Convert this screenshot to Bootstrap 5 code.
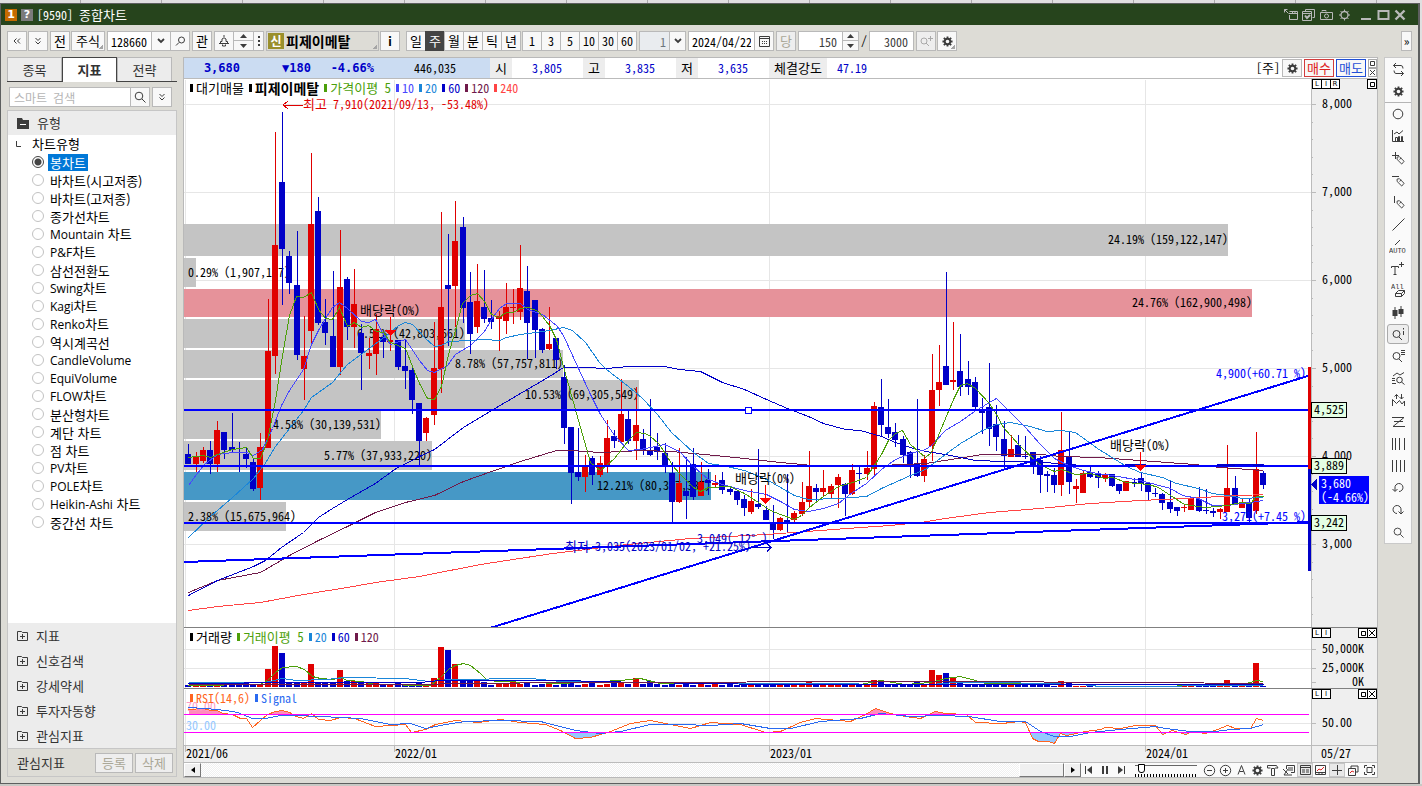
<!DOCTYPE html>
<html lang="ko">
<head>
<meta charset="utf-8">
<meta name="viewport" content="width=device-width, initial-scale=1">
<title>[9590] 종합차트</title>
<link href="https://cdn.jsdelivr.net/npm/bootstrap@5.3.0/dist/css/bootstrap.min.css" rel="stylesheet">
<style>
:root{--mono:"Noto Sans Mono CJK KR","Liberation Mono","Noto Sans CJK KR",monospace;--edge:#b9b9b9;--shell:#dddcd6;--ink:#3c3c3c}
body{font:12px/16px var(--mono);color:#000;background:#e0e0e0;height:100vh;overflow:hidden}
svg{display:block;flex:none}
.ic{fill:none;stroke:var(--ink);stroke-width:1}
.ic .f{fill:var(--ink);stroke:none}
.topstrip{height:3px;background:linear-gradient(90deg,#aaa 1px,#e0e0e0 1px) 80px 0/81px 3px repeat-x;flex:none}
.win{border:1px solid #5d5f5f;border-right-width:2px;margin-right:2px;background:var(--shell);min-height:0}
.footstrip{height:2px;background:#c9c9c5;flex:none}
.titlebar{height:21px;background:#26441c;color:#fff;padding:0 12px 0 4px;flex:none}
.tile{width:12px;height:12px;font:bold 11px/12px "DejaVu Sans",sans-serif;text-align:center;color:#fff}
.tile-o{background:#c46a00}.tile-g{background:#7b7b7b}
.titlebar .ic{stroke:#b9b9b9}
.titlebar .ic .f{fill:#b9b9b9}
.tbar{padding:6px 6px 6px 6px;gap:2px;flex:none}
.tb{--bs-btn-padding-x:0;--bs-btn-padding-y:0;--bs-btn-font-size:12px;--bs-btn-line-height:16px;--bs-btn-border-radius:0;--bs-btn-border-color:var(--edge);--bs-btn-bg:#f8f8f8;--bs-btn-color:#000;--bs-btn-font-family:var(--mono);--bs-btn-hover-bg:#fff;--bs-btn-hover-border-color:#999;
 width:20px;height:20px;display:inline-flex;align-items:center;justify-content:center;flex:none;position:relative}
.ko{font-size:13px}
.tb.ko{--bs-btn-font-size:13px}
.tb.on{background:#444;color:#fff;border-color:#444}
.tb.dim{color:#aaa797;background:#eee}
.tb.dim .ic{stroke:#aaa}
.corner::after{content:"";position:absolute;right:1px;bottom:1px;width:4px;height:4px;background:linear-gradient(135deg,transparent 50%,#a5a5a5 50%)}
.join>*+*{margin-left:-1px}
.fld{height:20px;border:1px solid var(--edge);border-radius:0;padding:0 3px;font:12px/16px var(--mono);background:#fff;color:#000;flex:none;min-height:0}
.w11{width:11px}.w17{width:17px}.w18{width:18px}.w30{width:31px}.w34{width:34px}.w45{width:45px}.w67{width:67px}
.fld.qty{color:#3c3c3c;padding-right:5px}
.spin{width:21px;height:20px;flex:none}
.spin.narrow{width:17px}
.spin .tb{width:100%;height:10px}
.spin .tb+.tb{height:11px;margin-top:-1px}
.stock{width:113px;height:20px;border:1px solid var(--edge);padding-left:1px;background:#dddcd6;position:relative;flex:none;gap:2px}
.stock b{font-size:14px}
.newtag{width:16px;height:16px;background:#9a8f2c;color:#fff;font-weight:bold;text-align:center}
.work{padding:0 6px 5px 6px;min-height:0}
.side{width:170px;flex:none;padding-bottom:1px}
.sidetabs{border-bottom:1px solid #444;height:25px;flex:none}
.sidetabs button{width:55px;height:24px;padding:0;border:1px solid var(--edge);border-bottom:0;background:#ececec;border-radius:0;color:#333;font:13px/22px var(--mono)}
.sidetabs button.active{background:#fff;border:1px solid #444;border-bottom:0;height:25px;font-weight:bold}
.sideb{border:1px solid #c6c6c6;min-height:0}
.find{padding:5px 2px 3px;gap:2px}
.find .fld{width:122px;padding:0 4px;background:#fff}
.find .fld::placeholder{color:#b5b5b5;opacity:1}
.grp{height:25px;background:#ececec;padding-left:9px;gap:8px;color:#333;border:0;width:100%;font:13px/16px var(--mono);text-align:left;flex:none}
.grp.open{height:24px}
.tree{background:#fff;font:13px/18px "Noto Sans CJK KR",sans-serif;min-height:0;overflow:hidden}
.tree label{height:18px;padding-left:24px;gap:4px}
.tree label>span{padding:0 2px;line-height:17px;white-space:nowrap}
.tree .lat{font:12px/16px "Open Sans","Noto Sans CJK KR",sans-serif}
.tree input{appearance:none;width:12px;height:12px;border:1px solid #c2c2c2;border-radius:50%;margin:0;background:#fff;flex:none}
.tree input:checked{border-color:#444;background:radial-gradient(circle,#444 0 3px,#fff 4px)}
.tree input:checked+span{background:#0078d7;color:#fff}
.treehead{padding-left:8px;gap:11px;height:18px}
.sidefoot{height:28px;background:var(--shell);border-top:1px solid #c6c6c6;padding:0 3px 0 9px;color:#333;flex:none}
.sidefoot .tb{width:38px}
.sidefoot .tb+.tb{margin-left:2px}
.board{border:1px solid var(--edge);background:#fff;min-width:0;margin-left:6px}
.quote{height:21px;border-bottom:1px solid #bbb;flex:none}
.quote .bl{background:#cbdcf2;width:306px;flex:none}
.num{color:#0000c8;text-align:right;flex:none}
.big{font:bold 12px/16px "DejaVu Sans Mono",monospace}
.q1{width:56px}.q2{width:71px}.q3{width:63px}.q4{width:82px;color:#000}
.lab{background:#ededed;width:22px;text-align:center;align-self:stretch;line-height:19px;flex:none}
.lab.wide{width:58px}
.val{width:71px;padding-right:21px}
.red{--bs-btn-color:#d22;--bs-btn-border-color:#d23c3c;width:30px;height:18px}
.blu{--bs-btn-color:#1f4fd6;--bs-btn-border-color:#1f4fd6;width:30px;height:18px}
.cfg{height:18px}
.tiny{width:9px;height:9px;border:1px solid #aaa;padding:0;background:#fff;display:flex;align-items:center;justify-content:center}
.pane{position:relative;border-bottom:1px solid #808080;flex:none;background:linear-gradient(#efefef,#efefef) right/66px 100% no-repeat}
.pane svg.plot{position:absolute;left:0;top:0;width:100%;height:100%;shape-rendering:crispEdges}
.pane.main{flex:1 1 0;min-height:0}
.vol{height:61px}.rsi{height:57px;border-color:#bbb}.dates{height:17px;background:#efefef;border-color:#bbb}
.legend{position:absolute;left:6px;top:1px;gap:5px;line-height:16px;height:16px;align-items:center}
.legend span{display:flex;align-items:center;gap:3px;white-space:nowrap}
.legend span::before{content:"";width:3px;height:8px;background:currentColor}
.legend b{font-size:14px}
.cg{color:#4c9f0a}.c10{color:#4646ff}.c20{color:#1a86d9}.c60{color:#0000c8}.c120{color:#701a4a}.c240{color:#ff4444}.cor{color:#ff6420}.csg{color:#2a6af0}
.lir{position:absolute;top:0;right:0;width:65px}
.lir button{width:10px;height:10px;border:1px solid #000;background:#fff;padding:0;font:7px/7px "DejaVu Sans",sans-serif;display:flex;align-items:center;justify-content:center;color:#000}
.lir .ic{stroke:#000}
.lir button+button{margin-left:-1px}
.lir button.end{margin-left:auto}
.plot text{font:12px var(--mono);white-space:pre}
.plot .ko{font-size:13px}
.scroller{height:14px;background:#fafafa;flex:none;overflow:hidden}
.sbtn{height:14px;border:1px solid #fff;border-right:1px solid #777;border-bottom:1px solid #777;background:#f0f0f0;padding:0;display:flex;align-items:center;justify-content:center;flex:none;outline:0}
.track{background:repeating-conic-gradient(#f0f0f0 0 25%,#fff 0 50%) 0 0/2px 2px}
.mini{width:16px;height:14px;border:0;background:none;padding:0;display:flex;align-items:center;justify-content:center;flex:none}
.mini.on{background:#e8e8e8;outline:1px solid #c6c6c6;outline-offset:-1px}
.zoomer{width:62px;height:14px;margin:0 4px 0 6px;background:linear-gradient(#666,#666) 0 2px/100% 1px no-repeat,repeating-linear-gradient(90deg,#000 0 1px,transparent 1px 3px) 0 11px/100% 3px no-repeat;appearance:none;flex:none}
.zoomer::-webkit-slider-thumb{appearance:none;width:7px;height:9px;border:1px solid #000;border-radius:0 0 3px 3px;background:#fff;margin-top:-4px}
.tools{width:28px;margin-left:6px;background:#fafafa;border:1px solid #c9c9c9;align-self:flex-start;flex:none}
.tools button{width:22px;height:22px;border:0;background:none;padding:0;display:flex;align-items:center;justify-content:center;margin:0 auto;border-radius:3px}
.tools button.on{border:1px solid #aaa;background:#eee;height:20px;margin:1px auto}
.tools hr{margin:0;border-color:#b5b5b5;opacity:1;height:0}
.tools text{font:7px "Liberation Mono",monospace;fill:#333;stroke:none}
</style>
</head>
<body class="d-flex flex-column">
<svg width="0" height="0" class="position-absolute">
<defs>
<symbol id="gear" viewBox="0 0 12 12"><circle cx="6" cy="6" r="3" stroke-width="2"/><path stroke-width="2" d="M6 .5v2M6 9.500v2M.5 6h2M9.500 6h2M2 2l1.500 1.500M8.500 8.500L10 10M10 2L8.500 3.500M3.500 8.500L2 10"/></symbol>
<symbol id="mag" viewBox="0 0 12 12"><circle cx="5" cy="5" r="3.800"/><path d="M8 8l3.500 3.500"/></symbol>
<symbol id="down" viewBox="0 0 8 6"><path stroke-width="1.800" d="M1 1l3 3 3-3"/></symbol>
<symbol id="dbl" viewBox="0 0 8 10"><path d="M1.500 2l2.500 2.500L6.500 2M1.500 5.500L4 8l2.500-2.500"/></symbol>
<symbol id="pen" viewBox="0 0 14 14"><path d="M5.500 5.500l2.500-.5 5 5-2.500 3-5-5zM8 8l2-1.500"/></symbol>
<symbol id="plusbox" viewBox="0 0 11 11"><path d="M.5 10.500V1.500h4l1 1h5v8zM3 6.500h5M5.500 4v5"/></symbol>
</defs>
</svg>
<div class="topstrip"></div>
<div class="win flex-grow-1 d-flex flex-column">
<header class="titlebar d-flex align-items-center">
  <span class="tile tile-o me-1">1</span><span class="tile tile-g me-1">?</span><span>[9590] <span class="ko">종합차트</span></span>
  <div class="ms-auto d-flex align-items-center gap-1">
    <svg class="ic" width="14" height="12"><path d="M5.500 2.500h8v8h-8V6M5 4.500h8M8.500 2v2.500M11 2v2.500M4.500 4.500l-4-4M.5 3.500v-3h3"/></svg>
    <svg class="ic" width="14" height="12"><path d="M3.500 2.500v-2h9v8h-2M.5 2.500h9v9h-9zM.5 4.500h9"/><path stroke-width="2" d="M3 6.500l2 2.500L8 6"/></svg>
    <svg class="ic" width="14" height="12"><path d="M.5 3.500h12v7H.5zM2 2.500v-1h4v1"/><circle cx="6.500" cy="7" r="2"/></svg>
    <svg class="ic" width="13" height="12" viewBox="0 0 12 12"><circle cx="6" cy="6" r="3.500" stroke-width="1.300"/><path d="M6 .5v2M6 9.500v2M.5 6h2M9.500 6h2M2 2l1.500 1.500M8.500 8.500L10 10M10 2L8.500 3.500M3.500 8.500L2 10"/></svg>
    <svg class="ic ms-1" width="14" height="12"><path stroke-width="2" d="M2 10h10"/></svg>
    <svg class="ic" width="13" height="12"><path stroke-width="2" d="M1.500 2h10v8h-10z"/></svg>
    <svg class="ic" width="12" height="12"><path stroke-width="2.400" d="M1.500 1.500l9 9M10.500 1.500l-9 9"/></svg>
  </div>
</header>
<div class="tbar d-flex align-items-center">
  <div class="d-flex" style="gap:1px">
    <button class="btn tb" aria-label="이전"><svg class="ic" width="10" height="8"><path d="M4.500 1.500L2 4l2.500 2.500M8 1.500L5.500 4 8 6.500"/></svg></button>
    <button class="btn tb" aria-label="펼침"><svg class="ic" width="8" height="10"><use href="#dbl"/></svg></button>
  </div>
  <div class="d-flex" style="gap:1px"><button class="btn tb ko">전</button><button class="btn tb ko w34 corner">주식</button></div>
  <div class="d-flex join">
    <input class="fld w45" value="128660" aria-label="종목코드">
    <button class="btn tb" aria-label="목록"><svg class="ic" width="8" height="6"><use href="#down"/></svg></button>
    <button class="btn tb" aria-label="찾기"><svg class="ic" width="11" height="11"><circle cx="6.500" cy="4" r="3"/><path d="M4 6.500L1 9.500"/></svg></button>
  </div>
  <button class="btn tb ko">관</button>
  <div class="d-flex join">
    <button class="btn tb" aria-label="알림"><svg class="ic" width="12" height="12"><path d="M6 0v2M1 8.500h10M2.500 8.500v-2h1.500V4Q6 1.500 8 4v2.500h1.500v2M4.500 9.500v1.500h3V9.500"/></svg></button>
    <div class="spin d-flex flex-column"><button class="btn tb" aria-label="위"><svg class="ic" width="7" height="4"><path class="f" d="M0 4l3.500-4L7 4z"/></svg></button><button class="btn tb" aria-label="아래"><svg class="ic" width="7" height="4"><path class="f" d="M0 0l3.500 4L7 0z"/></svg></button></div>
    <button class="btn tb w11" aria-label="더보기"><svg class="ic" width="2" height="12"><path class="f" d="M0 1h2v2H0zM0 5h2v2H0zM0 9h2v2H0z"/></svg></button>
  </div>
  <div class="d-flex" style="gap:1px">
    <div class="stock corner d-flex align-items-center"><span class="newtag">신</span><b>피제이메탈</b></div>
    <button class="btn tb fw-bold">i</button>
  </div>
  <div class="d-flex ms-1" style="gap:1px">
    <div class="d-flex join"><button class="btn tb ko">일</button><button class="btn tb ko on">주</button><button class="btn tb ko">월</button><button class="btn tb ko">분</button><button class="btn tb ko">틱</button><button class="btn tb ko">년</button></div>
    <div class="d-flex join"><button class="btn tb">1</button><button class="btn tb">3</button><button class="btn tb">5</button><button class="btn tb">10</button><button class="btn tb">30</button><button class="btn tb">60</button></div>
  </div>
  <div class="d-flex join"><input class="fld w30 text-end text-secondary bg-body-secondary" value="1" aria-label="단위"><button class="btn tb w17" aria-label="단위 목록"><svg class="ic" width="8" height="6"><use href="#down"/></svg></button></div>
  <div class="d-flex join"><input class="fld w67" value="2024/04/22" aria-label="날짜"><button class="btn tb" aria-label="달력"><svg class="ic" width="11" height="11"><path d="M.5.5h10v10H.5zM.5 2.500h10"/><path stroke-dasharray="1 1" d="M3 5.500h6M3 7.500h6"/></svg></button></div>
  <button class="btn tb dim ko">당</button>
  <div class="d-flex join"><input class="fld qty w45 text-end" value="150" aria-label="표시 개수"><div class="spin narrow d-flex flex-column"><button class="btn tb" aria-label="증가"><svg class="ic" width="7" height="4"><path class="f" d="M0 4l3.500-4L7 4z"/></svg></button><button class="btn tb" aria-label="감소"><svg class="ic" width="7" height="4"><path class="f" d="M0 0l3.500 4L7 0z"/></svg></button></div></div>
  <span>/</span>
  <input class="fld qty w45 text-end" value="3000" aria-label="전체 개수">
  <div class="d-flex" style="gap:1px"><button class="btn tb dim" aria-label="조회"><svg class="ic" width="13" height="12"><circle cx="4" cy="6" r="3"/><path d="M6 8l3 3M8 3.500h5M10.500 1v5"/></svg></button><button class="btn tb corner" aria-label="설정"><svg class="ic" width="11" height="11"><use href="#gear"/></svg></button></div>
  <button class="btn tb w11 ms-auto" aria-label="더보기">»</button>
</div>
<div class="work flex-grow-1 d-flex">
<aside class="side d-flex flex-column">
  <div class="sidetabs d-flex"><button>종목</button><button class="active">지표</button><button>전략</button></div>
  <div class="find d-flex"><div class="d-flex join"><input class="fld ko" placeholder="스마트 검색" aria-label="스마트 검색"><button class="btn tb" aria-label="검색"><svg class="ic" width="12" height="12"><use href="#mag"/></svg></button></div><button class="btn tb" aria-label="펼침"><svg class="ic" width="8" height="10"><use href="#dbl"/></svg></button></div>
  <div class="sideb flex-grow-1 d-flex flex-column">
    <button class="grp open d-flex align-items-center"><svg class="ic" width="12" height="11"><path class="f" d="M0 0h5l1 2h6v9H0z"/><path d="M3 6.500h6" stroke="#fff"/></svg>유형</button>
    <div class="tree flex-grow-1" id="tree"><div class="treehead d-flex align-items-center"><svg class="ic" width="5" height="6"><path d="M.5 0v5.500H5"/></svg>차트유형</div></div>
    <button class="grp d-flex align-items-center"><svg class="ic" width="11" height="11"><use href="#plusbox"/></svg>지표</button>
    <button class="grp d-flex align-items-center"><svg class="ic" width="11" height="11"><use href="#plusbox"/></svg>신호검색</button>
    <button class="grp d-flex align-items-center"><svg class="ic" width="11" height="11"><use href="#plusbox"/></svg>강세약세</button>
    <button class="grp d-flex align-items-center"><svg class="ic" width="11" height="11"><use href="#plusbox"/></svg>투자자동향</button>
    <button class="grp d-flex align-items-center"><svg class="ic" width="11" height="11"><use href="#plusbox"/></svg>관심지표</button>
    <div class="sidefoot d-flex align-items-center"><span class="me-auto ko">관심지표</span><button class="btn tb dim ko">등록</button><button class="btn tb dim ko">삭제</button></div>
  </div>
</aside>
<main class="board flex-grow-1 d-flex flex-column">
  <div class="quote d-flex align-items-center">
    <div class="bl d-flex align-items-center align-self-stretch"><span class="num big q1">3,680</span><span class="num big q2">▼180</span><span class="num big q3">-4.66%</span><span class="num q4">446,035</span></div>
    <span class="lab ko">시</span><span class="num val">3,805</span><span class="lab ko">고</span><span class="num val">3,835</span><span class="lab ko">저</span><span class="num val">3,635</span><span class="lab ko wide">체결강도</span><span class="num" style="width:40px">47.19</span>
    <div class="ms-auto d-flex align-items-center" style="gap:2px"><span>[<span class="ko">주</span>]</span><button class="btn tb cfg" aria-label="설정"><svg class="ic" width="11" height="11"><use href="#gear"/></svg></button><button class="btn tb ko red">매수</button><button class="btn tb ko blu">매도</button>
    <div class="d-flex flex-column"><button class="tiny" aria-label="최대화"><svg class="ic" width="5" height="5"><path d="M.5.5h4v4h-4z"/></svg></button><button class="tiny" aria-label="닫기"><svg class="ic" width="5" height="5"><path d="M0 0l5 5M5 0L0 5"/></svg></button></div></div>
  </div>
  <div class="pane main"><svg class="plot" id="pMain"></svg>
    <div class="legend d-flex"><span class="ko">대기매물</span><span><b>피제이메탈</b></span><span class="cg ko">가격이평 5</span><span class="c10">10</span><span class="c20">20</span><span class="c60">60</span><span class="c120">120</span><span class="c240">240</span></div>
    <div class="lir d-flex"><button>L</button><button>I</button><button>R</button><button class="end" aria-label="확대"><svg class="ic" width="5" height="5"><path d="M.5.5h4v4h-4z"/></svg></button></div>
  </div>
  <div class="pane vol"><svg class="plot" id="pVol"></svg>
    <div class="legend d-flex"><span class="ko">거래량</span><span class="cg ko">거래이평 5</span><span class="c20">20</span><span class="c60">60</span><span class="c120">120</span></div>
    <div class="lir d-flex"><button>L</button><button>I</button><button class="end" aria-label="확대"><svg class="ic" width="5" height="5"><path d="M.5.5h4v4h-4z"/></svg></button><button aria-label="닫기"><svg class="ic" width="6" height="6"><path d="M0 0l6 6M6 0L0 6"/></svg></button></div>
  </div>
  <div class="pane rsi"><svg class="plot" id="pRsi"></svg>
    <div class="legend d-flex"><span class="cor">RSI(14,6)</span><span class="csg">Signal</span></div>
    <div class="lir d-flex"><button>L</button><button>I</button><button class="end" aria-label="확대"><svg class="ic" width="5" height="5"><path d="M.5.5h4v4h-4z"/></svg></button><button aria-label="닫기"><svg class="ic" width="6" height="6"><path d="M0 0l6 6M6 0L0 6"/></svg></button></div>
  </div>
  <div class="pane dates"><svg class="plot" id="pDate"></svg></div>
  <div class="scroller d-flex">
    <button class="sbtn w17" aria-label="왼쪽"><svg width="4" height="6"><path d="M4 0v6L0 3z"/></svg></button>
    <div class="track flex-grow-1 d-flex justify-content-end"><div class="sbtn w45"></div></div>
    <button class="sbtn w17" aria-label="오른쪽"><svg width="4" height="6"><path d="M0 0v6l4-3z"/></svg></button>
    <button class="mini" aria-label="처음"><svg class="ic" width="8" height="8"><path d="M.5 0v8"/><path class="f" d="M7 0v8L2 4z"/></svg></button>
    <button class="mini" aria-label="정지"><svg class="ic" width="8" height="8"><path stroke-width="2" d="M2 0v8M6 0v8"/></svg></button>
    <button class="mini" aria-label="끝"><svg class="ic" width="8" height="8"><path d="M7.500 0v8"/><path class="f" d="M1 0v8l5-4z"/></svg></button>
    <input type="range" class="zoomer" value="5" aria-label="확대 비율">
    <button class="mini" aria-label="축소"><svg class="ic" width="13" height="13"><circle cx="6.500" cy="6.500" r="5.200"/><path d="M4 6.500h5"/></svg></button>
    <button class="mini" aria-label="확대"><svg class="ic" width="13" height="13"><circle cx="6.500" cy="6.500" r="5.200"/><path d="M4 6.500h5M6.500 4v5"/></svg></button>
    <button class="mini" aria-label="글자"><svg class="ic" width="9" height="10"><path d="M1 9.500L4.500.5 8 9.500M2.500 6.500h4"/></svg></button>
    <button class="mini" aria-label="설정"><svg class="ic" width="11" height="11"><use href="#gear"/></svg></button>
    <button class="mini" aria-label="도구"><svg class="ic" width="12" height="11"><path d="M.5 3V.5h9l1.500 2.500M.5 3h3M8 3h3M4.500 3.500h3v7h-3z"/></svg></button>
    <button class="mini" aria-label="저장"><svg class="ic" width="12" height="11"><path d="M3.500 4V.5h8v7H8M5 3h5M5 5h5M0 4l5 5M5 4L1 10H9"/></svg></button>
    <button class="mini on" aria-label="표"><svg class="ic" width="11" height="11"><path d="M.5.5h10v9H.5zM.5 2.500h10M2 5h3M2 7h3M6 5h3M6 7h3"/></svg></button>
    <button class="mini" aria-label="차트"><svg class="ic" width="12" height="11"><path d="M.5.5h10v9H.5zM.5 7.500h10M4 7.500v2M7 7.500v2"/><path stroke="#d22" d="M2 6l2-2 2 1 3-3"/></svg></button>
    <button class="mini on" aria-label="십자선"><svg class="ic" width="10" height="10"><path d="M0 5.500h10M5.500 0v10"/></svg></button>
    <button class="mini" aria-label="겹침"><svg class="ic" width="11" height="11"><path d="M3 3V1h7v6H8M.5 3.500h7v7h-7z"/><path stroke="#d22" d="M2 8l2-2 2 1"/></svg></button>
    <button class="mini" aria-label="전체화면"><svg class="ic" width="11" height="10"><path d="M3 2.500h5v5H3zM.5 3V.5H3M8 .5h2.500V3M10.500 7v2.500H8M3 9.500H.5V7"/></svg></button>
  </div>
</main>
<nav class="tools" aria-label="그리기 도구">
  <button aria-label="전환"><svg class="ic" width="13" height="13"><path d="M4 0L1.500 2.500 4 5M1.500 2.500H9q2 0 2 3M9 8l2.500 2.500L9 13M11.500 10.500H4q-2 0-2-3"/></svg></button>
  <button aria-label="설정"><svg class="ic" width="11" height="11"><use href="#gear"/></svg></button>
  <hr>
  <button aria-label="원"><svg class="ic" width="12" height="12"><circle cx="6" cy="6" r="4.800"/></svg></button>
  <button aria-label="지표"><svg class="ic" width="12" height="12"><path d="M.5 0v11.500H12M3.500 11V7.500h2V11M6.500 11V6.500h1V11M9.500 11V6.500h1V11M2 4l3-2 2 2 4-3.500"/></svg></button>
  <button aria-label="십자 펜"><svg class="ic" width="13" height="13"><path d="M0 3.500h7M3.500 0v7"/><use href="#pen"/></svg></button>
  <button aria-label="수평 펜"><svg class="ic" width="13" height="13"><path d="M0 2.500h7"/><use href="#pen"/></svg></button>
  <button aria-label="수직 펜"><svg class="ic" width="13" height="13"><path d="M2.500 0v7"/><use href="#pen"/></svg></button>
  <button aria-label="추세선"><svg class="ic" width="13" height="13"><path d="M.5 12.500l12-12"/></svg></button>
  <button aria-label="자동"><svg class="ic" width="18" height="15"><path d="M6 6l5-5"/><text x="0" y="14">AUTO</text></svg></button>
  <button aria-label="글자"><svg class="ic" width="14" height="13"><path d="M.5 6V4.500h7V6M4 4.500v8M2.500 12.500h3M8 2.500h5M10.500 0v5"/></svg></button>
  <button aria-label="모두 지움"><svg class="ic" width="15" height="15"><text x="0" y="6">All</text><path d="M4.500 10.500l3-3h6l-3 3zM4.500 10.500v3h6v-3M10.500 13.500l3-3v-3"/></svg></button>
  <button aria-label="봉"><svg class="ic" width="12" height="13"><path d="M3 1v12M9 0v11"/><path class="f" d="M.5 4h5v6h-5zM6.500 3h5v5h-5z"/></svg></button>
  <button class="on" aria-label="정보"><svg class="ic" width="13" height="13"><circle cx="4.500" cy="6" r="3.500"/><path d="M7 9l3 3M11.500 3v4M11.500 0v1.500"/></svg></button>
  <button aria-label="목록 조회"><svg class="ic" width="13" height="13"><circle cx="4.500" cy="6" r="3.500"/><path d="M7 9l3 3M9 .5h4M9 2.500h4M9 4.500h4"/></svg></button>
  <button aria-label="분석"><svg class="ic" width="13" height="13"><circle cx="7.500" cy="8" r="2.800"/><path d="M9.500 10l3 2.500M0 6.500h3M0 8.500h3M0 11.500h4M1 4l4-3 3 2 4-2.500"/></svg></button>
  <button aria-label="파동"><svg class="ic" width="13" height="13"><path d="M.5 12V5.500l4 4 3-3 2.500 3.500 2.500-3v5M4.500 5V.5M2.500 2.500l2-2 2 2M9.500 0v5M7.500 3l2 2 2-2"/></svg></button>
  <button aria-label="지그재그"><svg class="ic" width="13" height="12"><path d="M0 1.500h12L1 10.500h12M2 5.500h9"/></svg></button>
  <button aria-label="시간선"><svg class="ic" width="13" height="12"><path d="M.5 0v12M3.500 0v12M7.500 0v12M12.500 0v12"/></svg></button>
  <button aria-label="등간격선"><svg class="ic" width="13" height="12"><path d="M.5 0v12M4.500 0v12M8.500 0v12M12.500 0v12"/></svg></button>
  <button aria-label="되돌리기"><svg class="ic" width="12" height="12"><path d="M3 9V6a4 4 0 1 1 4 3.500M.5 7L3 9.500 5.500 7"/></svg></button>
  <button aria-label="다시"><svg class="ic" width="12" height="12"><path d="M9 9V6a4 4 0 1 0-4 3.500M6.500 7.500L9 10l2.500-2.500"/></svg></button>
  <button aria-label="돋보기"><svg class="ic" width="11" height="11"><use href="#mag"/></svg></button>
</nav>
</div>
</div>
<div class="footstrip"></div>
<script src="https://cdn.jsdelivr.net/npm/bootstrap@5.3.0/dist/js/bootstrap.bundle.min.js"></script>
<script>
// Chart type list
["봉차트","바차트(시고저종)","바차트(고저종)","종가선차트","Mountain 차트","P&F차트","삼선전환도","Swing차트","Kagi차트","Renko차트","역시계곡선","CandleVolume","EquiVolume","FLOW차트","분산형차트","계단 차트","점 차트","PV차트","POLE차트","Heikin-Ashi 차트","중간선 차트"].forEach((n,i)=>{
  const l=document.createElement("label");l.className="d-flex align-items-center";
  const r=document.createElement("input");r.type="radio";r.name="ctype";r.checked=i===0;
  const s=document.createElement("span");s.innerHTML=n.replace(/[A-Za-z&-]+/g,m=>`<span class="lat">${m.replace("&","&amp;")}</span>`);
  l.append(r,s);document.getElementById("tree").append(l);
});
// Weekly candles: direction, high, low, body top, body bottom (in chart units)
const C=`B444 464 454 464;R452 472 457 464;R447 463 450 461;B441 474 450 464;R421 472 430 464;B432 459 432 450;B413 452 447 450;B442 472 452 453;B448 468 454 459;B458 491 462 489;R433 500 447 488;R299 448 351 448;R132 374 245 356;B112 305 182 249;B251 294 256 283;B231 360 285 355;R316 400 356 369;R153 344 224 331;B197 325 211 323;B299 345 322 333;B271 367 336 367;R230 375 287 367;B277 340 279 327;R269 348 304 327;B324 390 333 353;R338 369 353 356;R314 375 329 354;B332 358 337 342;R334 351 340 342;B340 370 340 367;B340 389 366 371;B365 414 370 400;B403 465 403 441;R417 441 418 433;R322 425 368 415;R212 393 307 369;B234 346 285 289;R201 327 241 286;B217 323 227 308;B272 354 302 334;R264 333 301 327;B270 323 307 319;B300 329 318 322;R311 351 316 319;R283 334 307 321;R289 324 307 308;R245 320 288 312;B266 359 291 323;B300 358 300 330;B328 353 329 350;R307 350 344 349;B338 369 338 360;B365 444 377 428;B427 504 427 473;B428 481 472 477;R455 492 467 477;B456 485 458 475;R456 477 463 475;R420 473 438 465;B430 448 436 441;R379 444 414 442;B411 444 419 441;R387 460 425 441;B429 455 439 450;B399 456 450 455;B433 460 447 452;B443 473 453 467;B462 522 473 502;R448 503 483 502;B457 519 491 496;B448 500 464 497;R462 496 482 496;B469 495 480 483;R475 487 483 485;B472 494 480 490;B486 495 489 492;B491 505 491 500;B495 516 499 508;R489 514 501 512;B449 509 504 507;B506 520 510 520;B505 539 523 530;R517 531 518 530;B474 533 520 523;R511 522 513 520;R482 516 502 514;R451 507 486 502;B484 501 488 492;R470 496 488 492;R484 499 486 494;R474 508 477 485;B483 516 484 494;R464 495 470 494;B467 484 473 474;R451 480 468 474;R402 475 406 469;B379 436 407 425;B399 438 427 434;B423 447 432 440;B436 463 439 455;B451 478 452 464;B399 477 464 476;R455 482 459 476;R354 461 390 446;R345 406 382 390;B272 385 366 385;R322 390 380 382;B334 396 371 387;B361 395 379 387;B377 409 382 407;B398 434 409 413;B363 446 407 429;B405 451 424 437;B421 469 439 456;R435 457 449 457;B435 457 445 457;B436 459 456 457;B452 474 452 466;B456 493 460 475;B471 492 474 476;B468 493 475 485;R412 496 450 485;B432 494 456 482;R479 503 486 489;R470 493 473 493;B467 478 472 477;B471 488 473 478;R473 482 474 478;B474 487 474 486;B484 494 484 491;R481 491 481 491;B478 487 482 483;B472 491 478 484;B482 500 483 492;B488 497 493 494;B493 510 494 503;B481 513 502 509;B507 516 507 511;R505 512 507 508;R497 510 498 510;B487 512 499 511;B489 514 510 511;B508 517 511 513;R508 519 509 512;R445 512 488 512;B476 505 488 504;R498 508 503 508;B499 522 502 518;R432 514 469 511;B471 489 473 485`.split(";").map(s=>[s[0]==="R"?"#e00000":"#0000c8",...s.slice(1).split(" ").map(Number)]);
const MA=[
["#ff4444","188 610,217 606,260 602,303 594,347 587,375 582,419 576,480 564,552 553,627 544,690 538,766 534,860 527,890 525,920 522,945 518,989 512,1039 508,1090 503,1140 500,1184 498,1220 496,1263 494"],
["#701a4a","188 592,217 580,260 572,289 555,318 540,347 526,375 512,405 502,434 495,463 481,491 471,520 461,556 450,570 450,600 452,642 450,671 451,715 455,744 458,780 462,812 465,881 465,925 463,957 458,982 454,1040 454,1061 456,1097 457,1140 460,1194 464,1220 467,1263 470"],
["#0000c8","188 595,217 580,253 566,265 560,281 547,303 532,318 517,332 508,347 499,375 483,394 469,419 456,434 449,463 427,491 410,520 393,549 376,563 367,585 367,606 368,628 366,664 366,679 369,700 371,722 382,744 389,766 399,787 408,808 416,823 423,845 429,860 430,881 436,895 442,910 447,925 451,945 454,975 460,1003 461,1039 461,1061 464,1090 465,1110 465,1140 464,1150 465,1215 465,1218 464,1263 464"],
["#1a86d9","188 537,210 516,232 497,253 478,264 464,275 446,303 410,311 397,332 382,347 364,370 347,390 332,398 325,405 322,412 324,424 337,434 346,441 345,448 341,470 340,484 339,499 340,506 337,520 334,535 332,549 330,563 327,572 330,585 342,599 362,606 369,628 386,642 398,657 414,671 432,693 452,708 463,722 465,744 470,766 479,780 487,794 495,808 499,838 498,866 496,881 488,910 475,925 469,945 454,960 443,982 430,996 424,1010 422,1030 426,1046 431,1061 430,1075 432,1097 448,1126 466,1140 472,1162 477,1176 483,1198 488,1212 493,1234 496,1241 498,1263 497"],
["#4646ff","188 485,196 474,204 464,217 454,232 452,246 452,253 455,262 449,272 428,281 405,289 390,303 369,311 344,318 330,325 318,332 307,339 302,347 308,361 321,368 322,375 319,383 334,390 344,405 339,419 360,427 370,434 372,447 365,455 354,470 345,484 331,491 319,499 308,506 303,520 303,527 309,542 314,556 325,563 335,578 368,590 394,600 414,614 435,628 450,640 449,650 447,664 444,679 451,693 466,708 479,722 484,744 490,766 494,780 501,794 509,808 511,823 508,838 503,852 492,866 483,881 469,895 459,910 453,925 449,931 445,945 430,960 421,974 411,989 402,996 398,1010 412,1025 427,1039 443,1054 458,1068 465,1083 470,1097 473,1112 475,1140 480,1155 484,1170 488,1182 495,1198 498,1212 505,1227 505,1241 503,1250 502,1263 500"],
["#4c9f0a","188 457,196 456,203 455,210 457,217 454,232 449,246 447,253 458,260 458,267 440,275 400,283 349,289 315,296 296,303 297,311 292,318 309,325 318,332 319,339 307,347 326,354 322,361 327,368 325,376 331,383 332,390 342,405 348,412 366,419 383,427 398,434 399,441 386,448 354,455 330,462 303,470 295,477 293,484 301,491 314,498 317,506 312,513 312,520 308,528 307,538 311,549 325,556 339,563 366,578 420,590 462,596 467,600 470,614 458,628 440,636 432,645 433,650 436,658 443,665 453,672 465,679 473,693 487,700 491,708 487,729 486,744 493,758 502,770 510,780 514,794 519,801 515,809 507,823 496,838 486,852 482,866 477,881 454,888 440,895 433,902 430,910 444,925 457,931 452,945 418,953 399,960 385,967 383,975 388,989 403,996 414,1003 427,1018 444,1039 464,1054 471,1061 469,1075 474,1090 473,1104 478,1112 477,1126 482,1148 484,1158 487,1170 495,1184 504,1205 507,1227 505,1241 502,1250 503,1256 496,1263 496"]];
const VP=[[224,256,1228,"24.19% (159,122,147)"],[258,287,196,"0.29% (1,907,147)"],[289,317,1252,"24.76% (162,900,498)"],[319,348,465,"6.51% (42,803,661)"],[350,378,563,"8.78% (57,757,811)"],[380,410,639,"10.53% (69,305,549)"],[410,439,381,"4.58% (30,139,531)"],[441,470,432,"5.77% (37,933,220)"],[472,500,711,"12.21% (80,367,387)"],[502,531,286,"2.38% (15,675,964)"]];
const TALL={11:18,12:41,13:34,15:4,16:4,17:23,18:5,19:5,21:17,22:6,23:6,24:5,25:4,26:4,34:9,35:40,36:37,37:23,38:7,39:6,40:7,41:5,45:5,52:4,60:5,62:9,64:6,79:4,86:5,95:7,96:5,101:6,103:17,104:12,105:14,106:9,107:5,121:6,122:4,144:7,148:24};
const VMA=[["#4c9f0a","188 685,260 684,267 680,275 672,282 667,296 666,304 669,312 676,320 678,332 679,340 677,347 680,361 681,375 684,430 685,440 677,448 669,455 665,463 663,470 665,480 673,487 680,500 681,560 683,620 680,640 678,660 683,860 684,880 680,905 684,930 682,945 678,960 676,975 680,985 683,1240 685,1256 680,1263 681"],
["#1a86d9","188 682,265 682,282 678,296 680,325 679,346 677,405 678,428 681,440 680,448 679,530 678,560 681,640 682,930 684,955 682,1000 682,1080 684,1100 686,1263 685"],
["#0000c8","188 683,300 682,420 682,440 680,560 680,640 682,770 684,1263 684"],
["#701a4a","188 684,400 684,480 683,560 682,940 681,1144 682,1263 683"]];
const RSI="188 709,203 708,210 710,217 710,222 713,232 714,240 718,246 718,252 727,260 720,267 714,275 711,282 710,289 712,296 716,303 718,311 713,318 719,330 720,340 717,354 718,375 726,390 725,405 724,411 732,425 729,435 724,455 720,478 722,500 719,520 722,545 724,560 730,575 738,590 737,610 731,630 723,650 720,690 728,710 722,740 724,765 732,780 731,800 722,815 718,850 721,865 714,875 708,890 713,905 716,920 718,935 711,945 713,966 714,975 722,1002 723,1018 721,1025 722,1032 738,1038 741,1048 741,1054 743,1060 733,1066 735,1085 731,1100 729,1105 727,1120 728,1135 725,1155 725,1162 734,1172 730,1185 734,1192 731,1205 733,1217 729,1227 725,1235 728,1250 728,1256 718,1263 720";
const SIG="188 707,205 708,225 710,237 712,252 718,265 718,280 715,295 715,320 716,360 718,390 724,410 723,425 728,445 724,465 721,500 720,540 721,575 730,600 733,620 731,650 724,680 724,710 725,740 723,770 728,790 728,820 721,860 718,880 713,910 716,940 715,968 716,1000 721,1025 721,1040 731,1054 736,1070 736,1090 732,1120 729,1155 726,1165 728,1190 731,1215 731,1230 729,1250 728,1263 724";
const AXIS=66,X0=184,SPAN=1127;
// Each pane maps chart units onto its current size
function view(id,y0,h){
  const el=document.getElementById(id),W=el.clientWidth,H=el.clientHeight,k=(W-AXIS)/SPAN,q=H/h;
  const X=v=>Math.round((v-X0)*k),Y=v=>Math.round((v-y0)*q),R=W-AXIS;let o="";
  return {W,H,X,Y,R,
    line(a,b,c,d,col,w=1){o+=`<path d="M${a} ${b}L${c} ${d}" stroke="${col}" stroke-width="${w}" fill="none"/>`},
    rect(x,y,w,h,f,s=""){o+=`<rect x="${x}" y="${y}" width="${w}" height="${h}" fill="${f}" ${s}/>`},
    poly(s,col){o+=`<polyline points="${this.pts(s)}" fill="none" stroke="${col}"/>`},
    pts(s){return s.split(",").map(p=>{const[a,b]=p.split(" ");return X(+a)+.5+" "+(Y(+b)+.5)}).join(" ")},
    text(x,y,t,col="#000",anchor="start"){o+=`<text x="${x}" y="${y}" fill="${col}" text-anchor="${anchor}">${t.replace(/[가-힣]+/g,'<tspan class="ko">$&</tspan>')}</text>`},
    raw(s){o+=s},
    grid(){[185,394,769,1145].forEach(v=>this.rect(X(v),1,1,H,"#e6e6e6"))},
    axis(){this.rect(R,0,1,H,"#bbb")},
    done(){el.innerHTML=o}};
}
function draw(){
  let v=view("pMain",79,548),{X,Y,R}=v;
  v.grid();
  for(let p=3000;p<=8000;p+=1000)v.rect(0,Y(104+(8000-p)*.088),R,1,"#e6e6e6");
  VP.forEach(([a,b,x],i)=>v.rect(0,Y(a),X(x),Y(b)-Y(a),i===2?"#e6929a":i===8?"#4698c6":"#c4c4c4"));
  VP.forEach(([a,b,x,t],i)=>{const y=Y((a+b)/2)+4;i===1||i===9?v.text(4,y,t):v.text(X(x),y,t,"#000","end")});
  C.forEach(([c,h,l,t,b],i)=>{const x=X(188.3+i*7.216);v.rect(x,Y(h),1,Y(l)-Y(h),c);v.rect(x-3,Y(t),6,Math.max(1,Y(b)-Y(t)),c)});
  MA.forEach(([c,s])=>v.poly(s,c));
  [410,466,523].forEach(y=>v.rect(0,Y(y)-1,R,2,"#0000ff"));
  v.line(0,Y(562),R,Y(522),"#0000ff",2);v.line(X(490),Y(628),R,Y(375),"#0000ff",2);
  [[1130,1144],[1217,1235],[1253,1263]].forEach(([a,b])=>v.rect(X(a),Y(464),X(b)-X(a),2,"#0000c8"));
  v.rect(X(745)+.5,Y(407)+.5,6,6,"#fff",'stroke="#00f"');
  v.rect(R-3,Y(367),3,Y(469)-Y(367),"#e00000");v.rect(R-3,Y(469),3,Y(571)-Y(469),"#0000c8");
  v.line(X(283),Y(105)+.5,X(283)+20,Y(105)+.5,"#e00000");v.raw(`<path d="M${X(283)+5} ${Y(101)}L${X(283)} ${Y(105)}l5 4" fill="none" stroke="#e00000"/>`);
  v.text(X(283)+20,Y(109),"최고 7,910(2021/09/13, -53.48%)","#e00000");
  [[360,315],[735,483],[1110,450]].forEach(([x,y])=>{v.text(X(x),Y(y),"배당락(0%)");const a=X(x+30),b=Y(y);v.rect(a,b+2,1,14,"#f00");v.raw(`<path d="M${a-5} ${b+15}h11l-5.500 6z" fill="#f00"/>`)});
  v.text(X(565),Y(551),"최저 3,035(2023/01/02, +21.25%)","#0000c8");
  v.raw(`<path d="M${X(565)+187} ${Y(547)+.5}h19m-4 -4l4 4l-4 4" fill="none" stroke="#0000c8"/>`);
  v.text(X(697),Y(543),"3,049( 12° )","#0000c8");
  v.text(R-5,Y(378),"4,900(+60.71 %)","#0000ff","end");v.text(R-5,Y(521),"3,271(+7.45 %)","#0000ff","end");
  v.axis();
  for(let p=2200;p<=8000;p+=200){const y=Y(104+(8000-p)*.088);v.rect(R,y,p%1000?2:5,1,"#bbb");if(p%1000===0&&p>2500)v.text(R+11,y+4,p.toLocaleString("en-US"));}
  [[410,"4,525"],[466,"3,889"],[523,"3,242"]].forEach(([y,t])=>{v.rect(R+.5,Y(y)-7.5,35,15,"#e4ffe4",'stroke="#000"');v.text(R+3,Y(y)+4,t)});
  v.rect(R+8,Y(476),50,28,"#0000ff");v.text(R+10,Y(476)+12,"3,680","#fff");v.text(R+10,Y(476)+26,"(-4.66%)","#fff");
  v.raw(`<path d="M${R+6} ${Y(479)}v11l-6-5.500z" fill="#0000c8"/>`);
  v.done();

  v=view("pVol",628,60);({X,Y,R}=v);v.grid();
  [649,668].forEach(y=>v.rect(0,Y(y),R,1,"#e6e6e6"));
  C.forEach((c,i)=>{const h=TALL[i]||(i<60?(i*7%3)+2:i<120?(i*5%2)+2:1);v.rect(X(188.3+i*7.216)-3,Y(687)-h,6,h,c[0])});
  VMA.forEach(([c,s])=>v.poly(s,c));v.axis();
  [[649,"50,000K"],[668,"25,000K"],[682,"0K"]].forEach(([y,t])=>{v.rect(R,Y(y),5,1,"#bbb");v.text(R+53,Y(y)+4,t,"#000","end")});v.done();

  v=view("pRsi",689,56);({X,Y,R}=v);v.grid();v.rect(0,Y(723),R,1,"#e6e6e6");
  v.raw(`<clipPath id="hi"><rect width="${R}" height="${Y(714)}"/></clipPath><clipPath id="lo"><rect y="${Y(732)}" width="${R}" height="40"/></clipPath>`);
  v.raw(`<polygon clip-path="url(#hi)" points="${v.pts(RSI+",1263 714,188 714")}" fill="#ff8cbc"/><polygon clip-path="url(#lo)" points="${v.pts(RSI+",1263 732,188 732")}" fill="#96c8ff"/>`);
  v.text(2,Y(711),"70.00","#ff9cc8");v.text(2,Y(730),"30.00","#96c8ff");
  v.poly(RSI,"#ff6420");v.poly(SIG,"#2a6af0");
  v.rect(0,Y(714),R-2,1,"#ff00ff");v.rect(0,Y(732),R-2,1,"#ff00ff");
  v.axis();v.rect(R,Y(723),5,1,"#bbb");v.text(R+11,Y(723)+4,"50.00");v.done();

  v=view("pDate",746,16);({X,Y,R}=v);
  [[185,"2021/06"],[394,"2022/01"],[769,"2023/01"],[1145,"2024/01"]].forEach(([x,t])=>{v.rect(X(x),0,1,6,"#bbb");v.text(X(x)+1,12,t)});
  v.axis();v.text(R+10,12,"05/27");v.done();
}
draw();addEventListener("resize",draw);
</script>
</body>
</html>
